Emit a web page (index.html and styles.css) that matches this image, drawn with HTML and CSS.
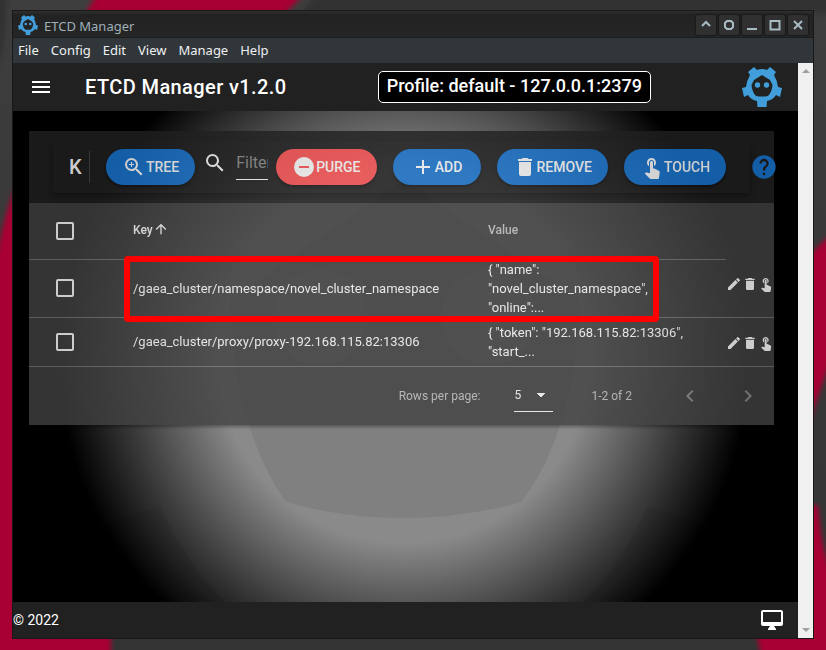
FILE: index.html
```html
<!DOCTYPE html>
<html lang="en">
<head>
<meta charset="utf-8">
<title>ETCD Manager</title>
<link rel="stylesheet" href="styles.css">
</head>
<body>
<svg class="defs" aria-hidden="true">
  <symbol id="logo" viewBox="0 0 40 40"><path fill-rule="evenodd" d="M6 5L12 0L15 3Q20 1 25 3L28 0L34 5L32 8Q35 13 36 20L40 21L38 30L34 28Q31 33 25 34L24.500 40H15.500L15 34Q9 33 6 28L2 30L0 21L4 20Q5 13 8 8ZM20 8L12 13L9.500 18Q10 25 14 29Q20 30 26 29Q30 25 30.500 18L28 13Z"/><circle cx="15.500" cy="18" r="2.700"/><circle cx="24.500" cy="18" r="2.700"/></symbol>
  <symbol id="zoom-in" viewBox="0 0 24 24"><path d="M15.5,14L20.5,19L19,20.5L14,15.5V14.71L13.73,14.43C12.59,15.41 11.11,16 9.5,16A6.5,6.5 0 0,1 3,9.5A6.5,6.5 0 0,1 9.5,3A6.5,6.5 0 0,1 16,9.5C16,11.11 15.41,12.59 14.43,13.73L14.71,14H15.5M9.5,14C12,14 14,12 14,9.5C14,7 12,5 9.5,5C7,5 5,7 5,9.5C5,12 7,14 9.5,14M12,10H10V12H9V10H7V9H9V7H10V9H12V10Z"/></symbol>
  <symbol id="search" viewBox="0 0 24 24"><path d="M15.5,14L20.5,19L19,20.5L14,15.5V14.71L13.73,14.43C12.59,15.41 11.11,16 9.5,16A6.5,6.5 0 0,1 3,9.5A6.5,6.5 0 0,1 9.5,3A6.5,6.5 0 0,1 16,9.5C16,11.11 15.41,12.59 14.43,13.73L14.71,14H15.5M9.5,14C12,14 14,12 14,9.5C14,7 12,5 9.5,5C7,5 5,7 5,9.5C5,12 7,14 9.5,14Z"/></symbol>
  <symbol id="minus" viewBox="0 0 24 24"><path d="M17,13H7V11H17M12,2A10,10 0 0,0 2,12A10,10 0 0,0 12,22A10,10 0 0,0 22,12A10,10 0 0,0 12,2Z"/></symbol>
  <symbol id="plus" viewBox="0 0 24 24"><path d="M19,13H13V19H11V13H5V11H11V5H13V11H19V13Z"/></symbol>
  <symbol id="trash" viewBox="0 0 24 24"><path d="M19,4H15.5L14.5,3H9.5L8.5,4H5V6H19M6,19A2,2 0 0,0 8,21H16A2,2 0 0,0 18,19V7H6V19Z"/></symbol>
  <symbol id="touch" viewBox="0 0 24 24"><path d="M9 11.24V7.5C9 6.12 10.12 5 11.5 5S14 6.12 14 7.5v3.74c1.21-.81 2-2.18 2-3.74C16 5.01 13.99 3 11.5 3S7 5.01 7 7.5c0 1.56.79 2.93 2 3.74zm9.84 4.63l-4.54-2.26c-.17-.07-.35-.11-.54-.11H13v-6c0-.83-.67-1.5-1.5-1.5S10 6.67 10 7.5v10.74l-3.43-.72c-.08-.01-.15-.03-.24-.03-.31 0-.59.13-.79.33l-.79.8 4.94 4.94c.27.27.65.44 1.06.44h6.79c.75 0 1.33-.55 1.44-1.28l.75-5.27c.01-.07.02-.14.02-.2 0-.62-.38-1.16-.91-1.38z"/></symbol>
  <symbol id="help" viewBox="0 0 24 24"><path d="M15.07,11.25L14.17,12.17C13.45,12.89 13,13.5 13,15H11V14.5C11,13.39 11.45,12.39 12.17,11.67L13.41,10.41C13.78,10.05 14,9.55 14,9C14,7.89 13.1,7 12,7A2,2 0 0,0 10,9H8A4,4 0 0,1 12,5A4,4 0 0,1 16,9C16,9.88 15.64,10.67 15.07,11.25M13,19H11V17H13M12,2A10,10 0 0,0 2,12A10,10 0 0,0 12,22A10,10 0 0,0 22,12C22,6.47 17.5,2 12,2Z"/></symbol>
  <symbol id="pencil" viewBox="0 0 24 24"><path d="M20.71,7.04C21.1,6.65 21.1,6 20.71,5.63L18.37,3.29C18,2.9 17.35,2.9 16.96,3.29L15.12,5.12L18.87,8.87M3,17.25V21H6.75L17.81,9.93L14.06,6.18L3,17.25Z"/></symbol>
  <symbol id="monitor" viewBox="0 0 24 24"><path d="M21,14H3V4H21M21,2H3C1.89,2 1,2.89 1,4V16A2,2 0 0,0 3,18H10L8,21V22H16V21L14,18H21A2,2 0 0,0 23,16V4C23,2.89 22.1,2 21,2Z"/></symbol>
  <symbol id="arrow-up" viewBox="0 0 24 24"><path d="M13,20H11V8L5.5,13.5L4.08,12.08L12,4.16L19.92,12.08L18.5,13.5L13,8V20Z"/></symbol>
  <symbol id="left" viewBox="0 0 24 24"><path d="M15.41,16.58L10.83,12L15.41,7.41L14,6L8,12L14,18L15.41,16.58Z"/></symbol>
  <symbol id="right" viewBox="0 0 24 24"><path d="M8.59,16.58L13.17,12L8.59,7.41L10,6L16,12L10,18L8.59,16.58Z"/></symbol>
  <symbol id="menu" viewBox="0 0 24 24"><path d="M3,6H21V8H3V6M3,11H21V13H3V11M3,16H21V18H3V16Z"/></symbol>
</svg>

<svg class="wallpaper" viewBox="0 0 826 650" preserveAspectRatio="none" aria-hidden="true">
  <defs><filter id="soft"><feGaussianBlur stdDeviation="2.500"/></filter>
  <linearGradient id="wall" x2="0" y2="1"><stop offset="0" stop-color="#3e3e3e"/><stop offset=".6" stop-color="#363636"/><stop offset="1" stop-color="#333"/></linearGradient></defs>
  <rect width="826" height="650" fill="url(#wall)"/>
  <path d="M-10 -10H8L4 45Q2 62 -10 75ZM320 -10H836V14H300Z" fill="#333" filter="url(#soft)"/>
  <g fill="#a80030" filter="url(#soft)">
    <path d="M98 -8H306L285 14H85Z"/>
    <path d="M16 185Q-2 230 -10 300V660H111V632H16Z"/>
    <path d="M808 256L836 230V350Q822 380 808 428Z"/>
    <path d="M808 505H818Q822 560 836 580V660H762L756 632H808Z"/>
  </g>
</svg>

<div class="window">
  <header class="titlebar">
    <svg class="app-icon"><use href="#logo"/></svg>
    <span class="caption">ETCD Manager</span>
    <button class="win-btn" aria-label="Shade"><svg viewBox="0 0 12 12"><path d="M2 7L6 3L10 7"/></svg></button>
    <button class="win-btn" aria-label="Keep above"><svg viewBox="0 0 12 12"><path d="M4 2H8L10 4V8L8 10H4L2 8V4Z"/></svg></button>
    <button class="win-btn" aria-label="Minimize"><svg viewBox="0 0 12 12"><path d="M1 10H11"/></svg></button>
    <button class="win-btn" aria-label="Maximize"><svg viewBox="0 0 12 12"><path d="M1.500 2V10.500H10.500V2ZM1 2H11"/></svg></button>
    <button class="win-btn" aria-label="Close"><svg viewBox="0 0 12 12"><path d="M2 2L10 10M10 2L2 10"/></svg></button>
  </header>
  <nav class="menubar">
    <a href="#file">File</a><a href="#config">Config</a><a href="#edit">Edit</a><a href="#view">View</a><a href="#manage">Manage</a><a href="#help-menu">Help</a>
  </nav>
  <div class="viewport">
    <div class="page">
      <div class="appbar">
        <button class="icon-btn" aria-label="Menu"><svg class="i24"><use href="#menu"/></svg></button>
        <h1>ETCD Manager v1.2.0</h1>
        <div class="profile">Profile: default - 127.0.0.1:2379</div>
        <svg class="brand"><use href="#logo"/></svg>
      </div>
      <main>
        <svg class="backdrop" viewBox="0 0 785 491" preserveAspectRatio="xMidYMid slice" aria-hidden="true">
          <defs><radialGradient id="glow" gradientUnits="userSpaceOnUse" cx="391" cy="245" r="346"><stop offset=".54" stop-color="#8a8a8a"/><stop offset="1" stop-color="#000"/></radialGradient></defs>
          <rect width="785" height="491" fill="url(#glow)"/>
          <path d="M391 69L217 189Q218 260 238 320Q252 362 273 391Q328 407 391 407Q452 407 508 391Q531 362 545 320Q565 260 566 189Z" fill="#808080"/>
          <g fill="#8a8a8a"><circle cx="307" cy="206" r="48"/><circle cx="476" cy="206" r="48"/></g>
          <path d="M147 395L90 415L130 491H212Q175 455 147 395ZM635 395L692 415L652 491H570Q607 455 635 395Z" fill="#000" opacity=".06"/>
        </svg>
        <div class="panel">
        <section class="card">
          <div class="card-top">
            <div class="toolbar">
              <h2>K</h2>
              <button class="btn tree"><svg class="i24"><use href="#zoom-in"/></svg>TREE</button>
              <label class="filter"><svg class="i24"><use href="#search"/></svg><input type="text" placeholder="Filter" aria-label="Filter"></label>
              <button class="btn red"><svg class="i24"><use href="#minus"/></svg>PURGE</button>
              <button class="btn"><svg class="i24"><use href="#plus"/></svg>ADD</button>
              <button class="btn"><svg class="i24"><use href="#trash"/></svg>REMOVE</button>
              <button class="btn"><svg class="i24"><use href="#touch"/></svg>TOUCH</button>
            </div>
            <button class="icon-btn help" aria-label="Help"><svg class="i28"><use href="#help"/></svg></button>
          </div>
          <table>
            <colgroup><col class="c-check"><col><col class="c-value"><col class="c-actions"></colgroup>
            <thead><tr>
              <th><input type="checkbox" aria-label="Select all"></th>
              <th class="sorted">Key<svg class="i16"><use href="#arrow-up"/></svg></th>
              <th>Value</th>
            </tr></thead>
            <tbody>
              <tr>
                <td><input type="checkbox" aria-label="Select namespace"></td>
                <td>/gaea_cluster/namespace/novel_cluster_namespace</td>
                <td>{ "name": "novel_cluster_namespace", "online":...</td>
                <td><div class="actions"><button aria-label="Edit"><svg class="i16"><use href="#pencil"/></svg></button><button aria-label="Delete"><svg class="i16"><use href="#trash"/></svg></button><button aria-label="Touch"><svg class="i16"><use href="#touch"/></svg></button></div></td>
              </tr>
              <tr>
                <td><input type="checkbox" aria-label="Select proxy"></td>
                <td>/gaea_cluster/proxy/proxy-192.168.115.82:13306</td>
                <td>{ "token": "192.168.115.82:13306", "start_...</td>
                <td><div class="actions"><button aria-label="Edit"><svg class="i16"><use href="#pencil"/></svg></button><button aria-label="Delete"><svg class="i16"><use href="#trash"/></svg></button><button aria-label="Touch"><svg class="i16"><use href="#touch"/></svg></button></div></td>
              </tr>
            </tbody>
          </table>
          <div class="pager">
            <label for="rows">Rows per page:</label>
            <select id="rows"><option>5</option><option>10</option><option>25</option></select>
            <span class="range">1-2 of 2</span>
            <button class="icon-btn" aria-label="Previous page"><svg class="i24"><use href="#left"/></svg></button>
            <button class="icon-btn" aria-label="Next page"><svg class="i24"><use href="#right"/></svg></button>
          </div>
        </section>
        <div class="highlight"></div>
        </div>
      </main>
      <footer><span>© 2022</span><svg class="i24"><use href="#monitor"/></svg></footer>
    </div>
    <div class="scrollbar"><svg viewBox="0 0 8 4"><path d="M4 0L8 4H0Z"/></svg><svg viewBox="0 0 8 4"><path d="M0 0H8L4 4Z"/></svg></div>
  </div>
</div>
</body>
</html>
```
FILE: styles.css
```css
* { box-sizing: border-box; }
body {
  margin: 0;
  min-height: 100vh;
  padding: 10px 12px 11px;
  display: flex;
  background: #333;
  color: #fff;
  font-family: Roboto, "Liberation Sans", sans-serif;
  font-size: 14px;
}
svg { display: block; flex: none; fill: currentColor; }
button { border: 0; padding: 0; background: none; color: inherit; font: inherit; }
.defs { position: absolute; width: 0; height: 0; }
.i16 { width: 16px; height: 16px; }
.i24 { width: 24px; height: 24px; }
.i28 { width: 28px; height: 28px; }
.wallpaper { position: absolute; inset: 0; width: 100%; height: 100%; }

.window {
  position: relative;
  flex: 1;
  min-width: 0;
  display: flex;
  flex-direction: column;
  border: 1px solid #181818;
}
.titlebar {
  height: 27px;
  display: flex;
  align-items: center;
  gap: 3px;
  padding: 1px 5px 0;
  background: linear-gradient(#303030, #222 4px, #262626);
  border-bottom: 1px solid #1c1c1c;
  font-family: "Noto Sans", sans-serif;
  font-size: 13px;
  color: #9fb0b8;
}
.app-icon { width: 20px; height: 20px; color: #419eda; }
.caption { flex: 1; padding: 2px 0 0 3px; }
.win-btn {
  width: 20px;
  height: 20px;
  display: grid;
  place-items: center;
  border-radius: 2px;
  background: #303030;
  box-shadow: 0 0 1px 1px #1b1b1b;
}
.win-btn svg { width: 12px; height: 12px; fill: none; stroke: #a9bbc3; stroke-width: 2; }
.menubar {
  height: 25px;
  display: flex;
  align-items: center;
  gap: 12px;
  padding: 0 5px 2px;
  background: #31363b;
  font-family: "Noto Sans", sans-serif;
  font-size: 13px;
}
.menubar a { color: #eff0f1; text-decoration: none; }

.viewport { flex: 1; display: flex; min-height: 0; }
.page { flex: 1; min-width: 0; display: flex; flex-direction: column; }
.scrollbar {
  width: 15px;
  display: flex;
  flex-direction: column;
  align-items: center;
  justify-content: space-between;
  padding: 6px 0;
  background: #f0f0f0;
  color: #a0a0a0;
}
.scrollbar svg { width: 8px; height: 4px; }
.appbar {
  height: 48px;
  display: flex;
  align-items: center;
  padding: 0 16px;
  background: #212121;
}
h1 { flex: 1; margin: 0 0 0 32px; font-size: 20px; font-weight: 500; letter-spacing: .02em; }
.profile {
  margin-right: 91px;
  padding: 0 8px;
  height: 32px;
  line-height: 28px;
  border: 1px solid #fff;
  border-radius: 5px;
  background: #000;
  font-size: 18px;
  font-weight: 500;
}
.brand { width: 40px; height: 40px; color: #419eda; }

main { position: relative; flex: 1; padding: 20px 24px 20px 16px; background: #000; }
.backdrop { position: absolute; inset: 0; width: 100%; height: 100%; }
.panel { position: relative; }
.card { background: #424242; opacity: .8; box-shadow: 0 2px 3px rgba(0, 0, 0, .4); }
.card-top { height: 72px; display: flex; align-items: center; padding-left: 24px; background: #212121; }
.toolbar {
  flex: 1;
  height: 52px;
  display: flex;
  align-items: center;
  gap: 16px;
  padding: 0 24px 0 16px;
  box-shadow: 0 3px 6px rgba(0, 0, 0, .35);
}
.toolbar h2 {
  width: 21px;
  margin: 0;
  border-right: 1px solid #444;
  font-size: 20px;
  font-weight: 500;
  line-height: 32px;
}
.help { margin-right: -4px; color: #1976d2; }
.btn {
  height: 36px;
  min-width: 88px;
  padding: 0 16px;
  display: flex;
  align-items: center;
  justify-content: center;
  border-radius: 18px;
  background: #1976d2;
  box-shadow: 0 2px 3px rgba(0, 0, 0, .4);
  font-weight: 500;
}
.btn.red { background: #ff5252; }
.filter { display: flex; align-items: center; gap: 9px; margin: 0 -8px; padding-bottom: 8px; }
.filter input {
  width: 32px;
  height: 34px;
  padding: 0;
  border: 0;
  border-bottom: 1px solid #fff;
  background: none;
  color: #fff;
  font: 16px Roboto, sans-serif;
}
.filter input::placeholder { color: #8c8c8c; }

table { width: 100%; table-layout: fixed; border-collapse: collapse; font-size: 13px; line-height: 19px; }
.c-check { width: 80px; }
.c-value { width: 262px; }
.c-actions { width: 48px; }
th, td { padding: 0 24px; text-align: left; border-bottom: 1px solid #747474; font-weight: 400; }
th { height: 56px; font-size: 12px; font-weight: 500; color: #c4c4c4; }
th.sorted { color: #fff; }
th svg { display: inline-block; vertical-align: -3px; }
td { height: 49px; }
td:last-child { padding: 17px 0 0; vertical-align: top; }
.actions { display: flex; }
.actions button { width: 16px; }
input[type="checkbox"] {
  appearance: none;
  display: block;
  width: 18px;
  height: 18px;
  margin: 0 0 0 3px;
  border: 2px solid #fff;
  border-radius: 2px;
}
.pager {
  height: 58px;
  display: flex;
  align-items: center;
  justify-content: flex-end;
  padding-right: 14px;
  font-size: 12px;
  color: #c4c4c4;
}
.pager select {
  appearance: none;
  width: 39px;
  height: 33px;
  margin: 0 38px 0 34px;
  padding: 0;
  border: 0;
  border-bottom: 1px solid #fff;
  border-radius: 0;
  background: linear-gradient(to top right, transparent 50%, #fff 50%) 22px 14px / 5px 5px no-repeat, linear-gradient(to top left, transparent 50%, #fff 50%) 27px 14px / 5px 5px no-repeat;
  color: #fff;
  font: 12px Roboto, sans-serif;
}
.pager .icon-btn { margin-left: 34px; color: #8c8c8c; }
.range + .icon-btn { margin-left: 46px; }
.highlight {
  position: absolute;
  left: 95px;
  right: 115px;
  top: 125px;
  height: 66px;
  border: 6px solid #f00;
  border-radius: 4px;
}
footer {
  height: 36px;
  display: flex;
  align-items: center;
  justify-content: space-between;
  padding-right: 14px;
  background: #212121;
}
```
